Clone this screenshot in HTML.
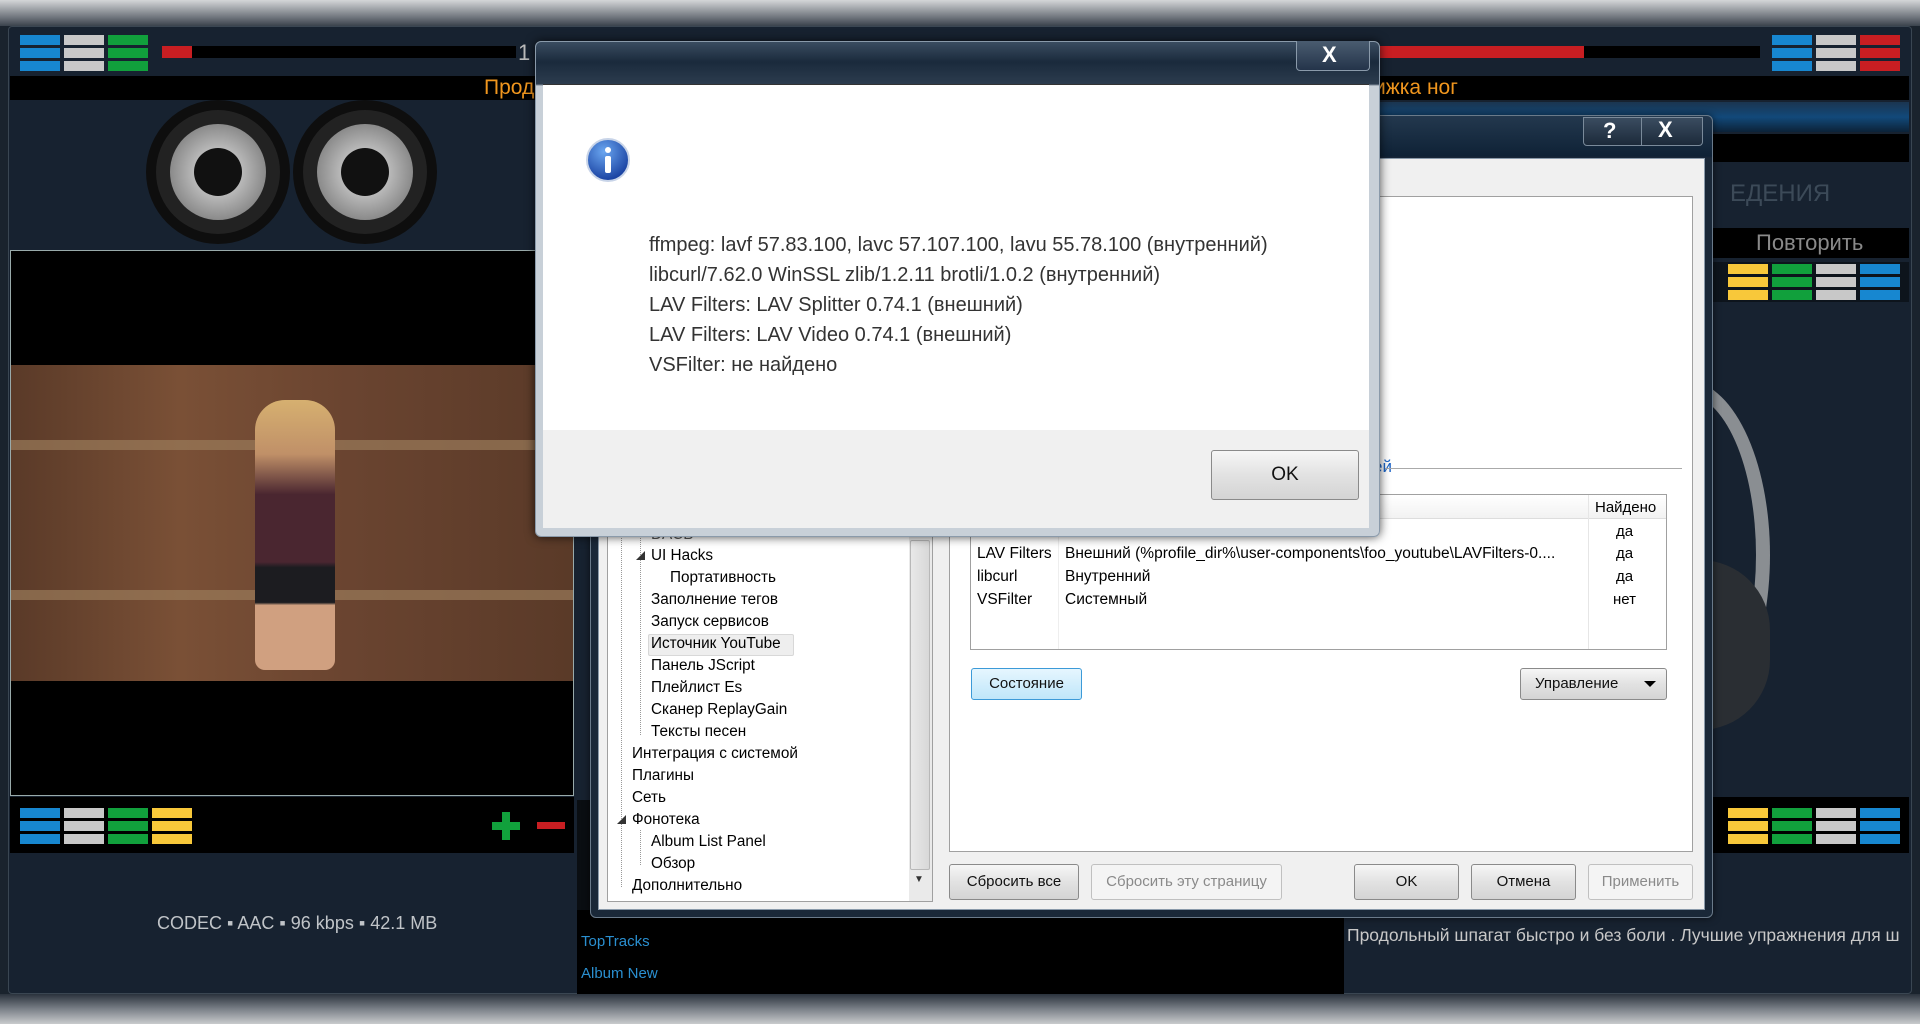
<!DOCTYPE html>
<html><head><meta charset="utf-8">
<style>
*{margin:0;padding:0;box-sizing:border-box}
body{width:1920px;height:1024px;overflow:hidden;background:#1a232d;font-family:"Liberation Sans","Noto Sans CJK SC",sans-serif;position:relative}
.a{position:absolute}
.t{position:absolute;white-space:nowrap}
.cell{position:absolute;width:40px;height:10px}
.btn{position:absolute;border:1px solid #8a8a8a;border-radius:3px;background:linear-gradient(#f6f6f6,#e2e2e2 50%,#d4d4d4);font-size:15px;color:#111;text-align:center;white-space:nowrap}
.tree{position:absolute;font-size:15.3px;color:#000;white-space:nowrap}
</style></head><body>
<div class="a" style="left:0;top:0;width:1920px;height:26px;background:linear-gradient(#d4d6d8,#6a7078 70%,#3a424c)"></div>
<div class="a" style="left:0;top:994px;width:1920px;height:30px;background:linear-gradient(#2a323c,#7a8088 50%,#c8cacc)"></div>
<div class="a" style="left:8px;top:26px;width:1904px;height:968px;background:#172230;border:1px solid #3a4652;border-radius:4px"></div>

<div class="cell" style="left:20px;top:35px;background:#1787d0"></div><div class="cell" style="left:20px;top:48px;background:#1787d0"></div><div class="cell" style="left:20px;top:61px;background:#1787d0"></div>
<div class="cell" style="left:64px;top:35px;background:#c8c8c8"></div><div class="cell" style="left:64px;top:48px;background:#c8c8c8"></div><div class="cell" style="left:64px;top:61px;background:#c8c8c8"></div>
<div class="cell" style="left:108px;top:35px;background:#11a03c"></div><div class="cell" style="left:108px;top:48px;background:#11a03c"></div><div class="cell" style="left:108px;top:61px;background:#11a03c"></div>
<div class="a" style="left:162px;top:46px;width:354px;height:12px;background:#000"></div>
<div class="a" style="left:162px;top:46px;width:30px;height:12px;background:#c81e22"></div>
<div class="t" style="left:518px;top:40px;font-size:22px;color:#bbb">1</div>

<div class="a" style="left:1372px;top:46px;width:388px;height:12px;background:#000"></div>
<div class="a" style="left:1372px;top:46px;width:212px;height:12px;background:#c81e22"></div>
<div class="cell" style="left:1772px;top:35px;background:#1787d0"></div><div class="cell" style="left:1772px;top:48px;background:#1787d0"></div><div class="cell" style="left:1772px;top:61px;background:#1787d0"></div>
<div class="cell" style="left:1816px;top:35px;background:#c8c8c8"></div><div class="cell" style="left:1816px;top:48px;background:#c8c8c8"></div><div class="cell" style="left:1816px;top:61px;background:#c8c8c8"></div>
<div class="cell" style="left:1860px;top:35px;background:#c81e22"></div><div class="cell" style="left:1860px;top:48px;background:#c81e22"></div><div class="cell" style="left:1860px;top:61px;background:#c81e22"></div>

<div class="a" style="left:10px;top:76px;width:1899px;height:24px;background:#000"></div>
<div class="t" style="left:484px;top:76px;font-size:21px;color:#f0961e">Прод</div>
<div class="t" style="left:1374px;top:76px;font-size:21px;color:#f0961e">ижка ног</div>

<div class="a" style="left:1380px;top:102px;width:529px;height:30px;background:linear-gradient(#1b3550,#12497a 50%,#0c2238)"></div>
<div class="a" style="left:1380px;top:134px;width:529px;height:28px;background:#000"></div>
<div class="t" style="left:1730px;top:180px;font-size:24px;color:#3c4a58">ЕДЕНИЯ</div>
<div class="a" style="left:1710px;top:228px;width:199px;height:30px;background:#000"></div>
<div class="t" style="left:1756px;top:230px;font-size:22px;color:#8a8a8a">Повторить</div>
<div class="a" style="left:1710px;top:262px;width:199px;height:40px;background:#0d141c"></div>
<div class="cell" style="left:1728px;top:264px;background:#f8c83a"></div><div class="cell" style="left:1728px;top:277px;background:#f8c83a"></div><div class="cell" style="left:1728px;top:290px;background:#f8c83a"></div>
<div class="cell" style="left:1772px;top:264px;background:#11a03c"></div><div class="cell" style="left:1772px;top:277px;background:#11a03c"></div><div class="cell" style="left:1772px;top:290px;background:#11a03c"></div>
<div class="cell" style="left:1816px;top:264px;background:#c8c8c8"></div><div class="cell" style="left:1816px;top:277px;background:#c8c8c8"></div><div class="cell" style="left:1816px;top:290px;background:#c8c8c8"></div>
<div class="cell" style="left:1860px;top:264px;background:#1787d0"></div><div class="cell" style="left:1860px;top:277px;background:#1787d0"></div><div class="cell" style="left:1860px;top:290px;background:#1787d0"></div>
<div class="a" style="left:1600px;top:380px;width:170px;height:350px;border:14px solid #8a8e92;border-radius:50%;border-left-color:transparent"></div>
<div class="a" style="left:1700px;top:560px;width:70px;height:170px;border-radius:0 90px 90px 0;background:#2a2e33"></div>

<div class="a" style="left:1710px;top:797px;width:199px;height:56px;background:#000"></div>
<div class="cell" style="left:1728px;top:808px;background:#f8c83a"></div><div class="cell" style="left:1728px;top:821px;background:#f8c83a"></div><div class="cell" style="left:1728px;top:834px;background:#f8c83a"></div>
<div class="cell" style="left:1772px;top:808px;background:#11a03c"></div><div class="cell" style="left:1772px;top:821px;background:#11a03c"></div><div class="cell" style="left:1772px;top:834px;background:#11a03c"></div>
<div class="cell" style="left:1816px;top:808px;background:#c8c8c8"></div><div class="cell" style="left:1816px;top:821px;background:#c8c8c8"></div><div class="cell" style="left:1816px;top:834px;background:#c8c8c8"></div>
<div class="cell" style="left:1860px;top:808px;background:#1787d0"></div><div class="cell" style="left:1860px;top:821px;background:#1787d0"></div><div class="cell" style="left:1860px;top:834px;background:#1787d0"></div>
<div class="t" style="left:1347px;top:925px;font-size:17.5px;color:#c8c8c8;width:560px;overflow:hidden">Продольный шпагат быстро и без боли . Лучшие упражнения для ш</div>

<div class="a" style="left:577px;top:910px;width:767px;height:84px;background:#000"></div>
<div class="a" style="left:577px;top:800px;width:30px;height:110px;background:#0a0e12"></div>
<div class="t" style="left:581px;top:933px;font-size:15px;color:#2a8fd0">TopTracks</div>
<div class="t" style="left:581px;top:965px;font-size:15px;color:#2a8fd0">Album New</div>

<svg class="a" style="left:140px;top:100px" width="310" height="150">
<defs><radialGradient id="c" cx="50%" cy="50%" r="50%"><stop offset="0" stop-color="#e8e8e8"/><stop offset="1" stop-color="#8a8a8a"/></radialGradient></defs>
<g><ellipse cx="78" cy="72" rx="72" ry="72" fill="#0e0e0e"/><ellipse cx="78" cy="72" rx="62" ry="62" fill="#222"/><ellipse cx="78" cy="72" rx="48" ry="48" fill="url(#c)"/><ellipse cx="78" cy="72" rx="24" ry="24" fill="#111"/></g>
<g><ellipse cx="225" cy="72" rx="72" ry="72" fill="#0e0e0e"/><ellipse cx="225" cy="72" rx="62" ry="62" fill="#222"/><ellipse cx="225" cy="72" rx="48" ry="48" fill="url(#c)"/><ellipse cx="225" cy="72" rx="24" ry="24" fill="#111"/></g>
</svg>

<div class="a" style="left:10px;top:250px;width:564px;height:546px;background:#000;border:1px solid #9aa"></div>
<div class="a" style="left:11px;top:365px;width:562px;height:316px;background:linear-gradient(90deg,#5a3a28,#7a5036 30%,#6a4430 60%,#5a3a28);"></div>
<div class="a" style="left:11px;top:440px;width:562px;height:10px;background:#9a7a5a;opacity:.7"></div>
<div class="a" style="left:11px;top:590px;width:562px;height:10px;background:#9a7a5a;opacity:.7"></div>
<div class="a" style="left:255px;top:400px;width:80px;height:270px;background:linear-gradient(#d6b070 0,#c09068 20%,#4a2630 35%,#4a2630 60%,#1c1c20 62%,#1c1c20 75%,#d0a080 76%);border-radius:30px 30px 10px 10px"></div>

<div class="a" style="left:10px;top:797px;width:564px;height:56px;background:#000"></div>
<div class="cell" style="left:20px;top:808px;background:#1787d0"></div><div class="cell" style="left:20px;top:821px;background:#1787d0"></div><div class="cell" style="left:20px;top:834px;background:#1787d0"></div>
<div class="cell" style="left:64px;top:808px;background:#c8c8c8"></div><div class="cell" style="left:64px;top:821px;background:#c8c8c8"></div><div class="cell" style="left:64px;top:834px;background:#c8c8c8"></div>
<div class="cell" style="left:108px;top:808px;background:#11a03c"></div><div class="cell" style="left:108px;top:821px;background:#11a03c"></div><div class="cell" style="left:108px;top:834px;background:#11a03c"></div>
<div class="cell" style="left:152px;top:808px;background:#f8c83a"></div><div class="cell" style="left:152px;top:821px;background:#f8c83a"></div><div class="cell" style="left:152px;top:834px;background:#f8c83a"></div>
<div class="a" style="left:492px;top:822px;width:28px;height:8px;background:#11a03c"></div>
<div class="a" style="left:502px;top:812px;width:8px;height:28px;background:#11a03c"></div>
<div class="a" style="left:537px;top:822px;width:28px;height:7px;background:#c81e22"></div>
<div class="t" style="left:157px;top:913px;font-size:18px;color:#c0c4c8">CODEC ▪ AAC ▪ 96 kbps ▪ 42.1 MB</div>

<div class="a" style="left:590px;top:115px;width:1123px;height:803px;border:1px solid #6a7a8a;border-radius:6px;background:linear-gradient(#23384e,#0f2236 40px,#1a2838 42px);box-shadow:0 0 8px rgba(0,0,0,.6)"></div>
<div class="a" style="left:1583px;top:117px;width:120px;height:29px;border:1px solid #7a8a9a;border-radius:0 0 4px 4px;background:linear-gradient(#3a4c60,#1c2a3a)"></div>
<div class="a" style="left:1641px;top:117px;width:1px;height:29px;background:#7a8a9a"></div>
<div class="t" style="left:1603px;top:118px;font-size:22px;font-weight:bold;color:#fff">?</div>
<div class="t" style="left:1658px;top:117px;font-size:22px;font-weight:bold;color:#fff">X</div>
<div class="a" style="left:598px;top:158px;width:1107px;height:752px;background:#f0f0f0;border:1px solid #8a9aaa"></div>
<div class="a" style="left:949px;top:196px;width:744px;height:656px;background:#fff;border:1px solid #a0a0a0"></div>
<div class="t" style="left:1373px;top:457px;font-size:17px;color:#1e66c8">ей</div>
<div class="a" style="left:1385px;top:468px;width:297px;height:1px;background:#aaa"></div>
<div class="a" style="left:970px;top:494px;width:697px;height:156px;background:#fff;border:1px solid #a0a0a0"></div>
<div class="a" style="left:971px;top:495px;width:695px;height:24px;background:linear-gradient(#fff,#f2f2f2);border-bottom:1px solid #ddd"></div>
<div class="a" style="left:1058px;top:519px;width:1px;height:130px;background:#eee"></div>
<div class="a" style="left:1588px;top:495px;width:1px;height:154px;background:#e6e6e6"></div>
<div class="t" style="left:1595px;top:499px;font-size:15px;color:#000">Найдено</div>
<div class="t" style="left:977px;top:545px;font-size:15.5px">LAV Filters</div>
<div class="t" style="left:1065px;top:545px;font-size:15.5px">Внешний (%profile_dir%\user-components\foo_youtube\LAVFilters-0....</div>
<div class="t" style="left:977px;top:568px;font-size:15.5px">libcurl</div>
<div class="t" style="left:1065px;top:568px;font-size:15.5px">Внутренний</div>
<div class="t" style="left:977px;top:591px;font-size:15.5px">VSFilter</div>
<div class="t" style="left:1065px;top:591px;font-size:15.5px">Системный</div>
<div class="t" style="left:1616px;top:523px;font-size:15px">да</div>
<div class="t" style="left:1616px;top:545px;font-size:15px">да</div>
<div class="t" style="left:1616px;top:568px;font-size:15px">да</div>
<div class="t" style="left:1613px;top:591px;font-size:15px">нет</div>
<div class="btn" style="left:971px;top:668px;width:111px;height:32px;line-height:30px;border-color:#3c9ad8;background:linear-gradient(#e6f6fe,#bfe6fa)">Состояние</div>
<div class="btn" style="left:1520px;top:668px;width:147px;height:32px;line-height:30px;text-align:left;padding-left:14px">Управление <span style="position:absolute;right:10px;top:12px;border:6px solid transparent;border-top:6px solid #000;border-bottom:0"></span></div>
<div class="btn" style="left:949px;top:864px;width:130px;height:36px;line-height:34px">Сбросить все</div>
<div class="btn" style="left:1091px;top:864px;width:191px;height:36px;line-height:34px;color:#8a8a8a;background:#f4f4f4;border-color:#c0c0c0">Сбросить эту страницу</div>
<div class="btn" style="left:1354px;top:864px;width:105px;height:36px;line-height:34px">OK</div>
<div class="btn" style="left:1471px;top:864px;width:105px;height:36px;line-height:34px">Отмена</div>
<div class="btn" style="left:1588px;top:864px;width:105px;height:36px;line-height:34px;color:#8a8a8a;background:#f4f4f4;border-color:#c0c0c0">Применить</div>
<div class="a" style="left:607px;top:530px;width:326px;height:372px;background:#fff;border:1px solid #a0a0a0"></div>
<div class="a" style="left:909px;top:531px;width:23px;height:370px;background:#eaeaea"></div>
<div class="a" style="left:910px;top:540px;width:20px;height:330px;background:linear-gradient(90deg,#e8e8e8,#d8d8d8);border:1px solid #b8b8b8;border-radius:2px"></div>
<div class="t" style="left:914px;top:874px;font-size:10px;color:#333">▼</div>
<div class="a" style="left:621px;top:535px;border-left:1px dotted #999;height:352px"></div>
<div class="a" style="left:640px;top:535px;border-left:1px dotted #999;height:200px"></div>
<div class="a" style="left:640px;top:830px;border-left:1px dotted #999;height:35px"></div>
<div class="tree" style="left:651px;top:526px;color:#555">DACB</div>
<div class="tree" style="left:636px;top:549px;font-size:9px;color:#333">◢</div>
<div class="tree" style="left:651px;top:547px">UI Hacks</div>
<div class="tree" style="left:670px;top:569px">Портативность</div>
<div class="tree" style="left:651px;top:591px">Заполнение тегов</div>
<div class="tree" style="left:651px;top:613px">Запуск сервисов</div>
<div class="a" style="left:648px;top:634px;width:146px;height:22px;background:#eee;border:1px solid #d8d8d8;border-radius:2px"></div>
<div class="tree" style="left:651px;top:635px">Источник YouTube</div>
<div class="tree" style="left:651px;top:657px">Панель JScript</div>
<div class="tree" style="left:651px;top:679px">Плейлист Es</div>
<div class="tree" style="left:651px;top:701px">Сканер ReplayGain</div>
<div class="tree" style="left:651px;top:723px">Тексты песен</div>
<div class="tree" style="left:632px;top:745px">Интеграция с системой</div>
<div class="tree" style="left:632px;top:767px">Плагины</div>
<div class="tree" style="left:632px;top:789px">Сеть</div>
<div class="tree" style="left:617px;top:813px;font-size:9px;color:#333">◢</div>
<div class="tree" style="left:632px;top:811px">Фонотека</div>
<div class="tree" style="left:651px;top:833px">Album List Panel</div>
<div class="tree" style="left:651px;top:855px">Обзор</div>
<div class="tree" style="left:632px;top:877px">Дополнительно</div>

<div class="a" style="left:535px;top:41px;width:845px;height:496px;border:1px solid #8a9aaa;border-radius:6px;background:linear-gradient(#3a4c60,#1a2a3c 20px,#2c3c4e 42px,#c8d0d8 44px);box-shadow:0 0 10px rgba(0,0,0,.7)"></div>
<div class="a" style="left:1296px;top:41px;width:74px;height:30px;border:1px solid #8a9aaa;border-top:0;border-radius:0 0 4px 4px;background:linear-gradient(#4a5c70,#24344a)"></div>
<div class="t" style="left:1322px;top:42px;font-size:22px;font-weight:bold;color:#fff">X</div>
<div class="a" style="left:543px;top:84px;width:826px;height:346px;background:#fff;border-top:1px solid #333"></div>
<div class="a" style="left:543px;top:430px;width:826px;height:98px;background:#f0f0f0"></div>
<svg class="a" style="left:585px;top:137px" width="46" height="46"><defs><radialGradient id="ib" cx="40%" cy="30%" r="70%"><stop offset="0" stop-color="#6aa6f0"/><stop offset="1" stop-color="#1840a0"/></radialGradient></defs><circle cx="23" cy="23" r="21" fill="url(#ib)" stroke="#c8d4e8" stroke-width="2"/><circle cx="23" cy="13" r="3" fill="#fff"/><rect x="20" y="19" width="6" height="17" rx="2" fill="#fff"/></svg>
<div class="t" style="left:649px;top:230px;font-size:20px;color:#333;line-height:30px">ffmpeg: lavf 57.83.100, lavc 57.107.100, lavu 55.78.100 (внутренний)<br>libcurl/7.62.0 WinSSL zlib/1.2.11 brotli/1.0.2 (внутренний)<br>LAV Filters: LAV Splitter 0.74.1 (внешний)<br>LAV Filters: LAV Video 0.74.1 (внешний)<br>VSFilter: не найдено</div>
<div class="btn" style="left:1211px;top:450px;width:148px;height:50px;line-height:48px;font-size:19px">OK</div>
</body></html>
